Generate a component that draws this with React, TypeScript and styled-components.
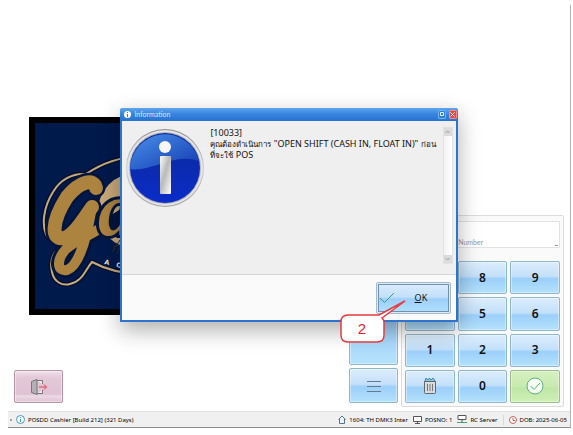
import React from "react";
import styled, { createGlobalStyle, css } from "styled-components";

const GlobalStyle = createGlobalStyle`
  * { box-sizing: border-box; }
  html, body, #root { height: 100%; }
  body {
    margin: 0;
    background: #fff;
    font-family: "Noto Sans", "Open Sans", sans-serif;
    color: #222;
  }
  button, input, textarea { font: inherit; color: inherit; }
`;

const Page = styled.div`
  height: 100%;
  min-height: 320px;
  padding: 5px 2px 7px 8px;
`;

const AppWindow = styled.div`
  position: relative;
  height: 100%;
  display: flex;
  flex-direction: column;
  border-right: 1px solid #b4b4b8;
  border-bottom: 1px solid #8c8c8c;
`;

const Workspace = styled.main`
  flex: 1;
  min-height: 0;
  display: flex;
  justify-content: space-between;
  align-items: flex-end;
  padding: 0 6px 4px;
`;

const LeftColumn = styled.div`
  display: flex;
  flex-direction: column;
  align-items: flex-start;
  gap: 55px;
  padding-bottom: 4px;
`;

const LogoFrame = styled.div`
  margin-left: 15px;
  width: 198px;
  height: 198px;
  border: 6px solid #000;
  background: #001a4c;
  svg { display: block; width: 100%; height: 100%; }
`;

type Tone = "blue" | "green" | "pink";

const tones = {
  blue: css`
    border-color: #8fb6cf;
    background: linear-gradient(#dcedfc 0%, #c3e0fa 46%, #9ccffa 54%, #b4e2fc 100%);
  `,
  green: css`
    border-color: #9dbb8d;
    background: linear-gradient(#d5f0bf 0%, #c8eab0 50%, #bfe6a6 54%, #cdf0b4 100%);
  `,
  pink: css`
    border-color: #b795a9;
    background: linear-gradient(#f2e2ec 0%, #e4c9d9 20%, #dfc2d3 75%, #ecdae5 80%, #dfc2d3 100%);
  `,
};

const Key = styled.button<{ $tone?: Tone }>`
  display: flex;
  align-items: center;
  justify-content: center;
  min-width: 0;
  padding: 0;
  border: 1px solid;
  border-radius: 2px;
  box-shadow: inset 0 0 0 1px rgba(255, 255, 255, 0.4);
  font-size: 12px;
  line-height: 16px;
  font-weight: 600;
  color: #111;
  ${({ $tone = "blue" }) => tones[$tone]}
`;

const ExitKey = styled(Key)`
  width: 49px;
  height: 33px;
`;

const RightColumn = styled.div`
  display: flex;
  align-items: flex-end;
  gap: 3px;
`;

const SideKeys = styled.div`
  display: grid;
  width: 49px;
  height: 142px;
  margin-bottom: 4px;
  grid-template-rows: 3fr 1fr;
  row-gap: 3px;
`;

const Panel = styled.section`
  width: 163px;
  padding: 5px 3px 3px;
  border: 1px solid #dcdcdc;
  border-radius: 2px;
  background: #fafafa;
`;

const NumberField = styled.textarea`
  display: block;
  width: 100%;
  height: 27px;
  margin-bottom: 13px;
  padding: 15px 2px 0 34px;
  border: 1px solid #e2e2e2;
  background:
    linear-gradient(#999, #999) right 1px bottom 1px / 3px 1px no-repeat,
    #fff;
  font-family: Lato, "Noto Sans", sans-serif;
  font-size: 7px;
  line-height: 10px;
  overflow: hidden;
  white-space: nowrap;
  resize: none;
  &::placeholder { color: #999; opacity: 1; }
`;

const Keypad = styled.div`
  display: grid;
  height: 142px;
  grid-template-columns: repeat(3, 1fr);
  grid-auto-rows: 1fr;
  gap: 3px;
`;

const StatusBar = styled.footer`
  display: flex;
  align-items: center;
  height: 16px;
  padding: 0 3px 0 2px;
  border-top: 1px solid #e2e2e2;
  background: #f0f0f0;
  font-size: 6px;
  line-height: 10px;
  color: #000;
  white-space: nowrap;
`;

const Grip = styled.span`
  width: 2px;
  height: 2px;
  margin-right: 4px;
  background: #b79aa0;
`;

const StatusItem = styled.span<{ $divided?: boolean }>`
  display: flex;
  align-items: center;
  gap: 3px;
  svg { flex: none; }
  ${({ $divided }) =>
    $divided &&
    css`
      padding-left: 5px;
      border-left: 1px solid #d8d8d8;
    `}
`;

const StatusGroup = styled.div`
  display: flex;
  gap: 5px;
  margin-left: auto;
`;

const Overlay = styled.div`
  position: absolute;
  inset: 0 0 3px;
  display: flex;
  align-items: center;
  justify-content: center;
`;

const Dialog = styled.section`
  position: relative;
  display: flex;
  flex-direction: column;
  width: 60%;
  min-width: 337px;
  height: 214px;
  border: 2px solid #2c74ce;
  border-top: 0;
  border-radius: 3px 3px 1px 1px;
  background: #fafafa;
  box-shadow: 0 8px 22px rgba(0, 0, 0, 0.32);
`;

const TitleBar = styled.header`
  display: flex;
  align-items: center;
  gap: 3px;
  height: 13px;
  margin: 0 -2px;
  padding: 0 1px 0 4px;
  border-radius: 3px 3px 0 0;
  background: linear-gradient(#5ea5ee, #3583de 50%, #2672d2);
  color: #d5e9fc;
  svg { flex: none; }
`;

const Title = styled.h1`
  flex: 1;
  margin: 0;
  font-family: Lato, "Noto Sans", sans-serif;
  font-size: 7px;
  line-height: 12px;
  font-weight: 400;
`;

const TitleButton = styled.button<{ $close?: boolean }>`
  display: flex;
  align-items: center;
  justify-content: center;
  width: 8px;
  height: 9px;
  padding: 0;
  border: 1px solid ${({ $close }) => ($close ? "#f08c88" : "#6fb2ee")};
  border-radius: 1px;
  background: ${({ $close }) => ($close ? "#df4b48" : "#2e80d4")};
`;

const DialogBody = styled.div`
  flex: 1;
  display: flex;
  gap: 6px;
  padding: 6px 3px 10px 2px;
  border-bottom: 1px solid #d6d6d6;
  background: #efefef;
`;

const InfoPicture = styled.svg`
  flex: none;
  width: 80px;
  height: 80px;
`;

const Message = styled.p`
  flex: 1;
  min-width: 0;
  margin: 0;
  font-size: 9px;
  line-height: 11px;
  color: #111;
`;

const MessageLine = styled.span`
  display: block;
  white-space: nowrap;
`;

const Thai = styled.span`
  font-size: 8px;
`;

const ScrollTrack = styled.div`
  display: flex;
  flex-direction: column;
  justify-content: space-between;
  width: 10px;
  border: 1px solid #e2e2e2;
  background: linear-gradient(90deg, #f3f3f3, #fff);
`;

const ScrollButton = styled.button`
  display: flex;
  align-items: center;
  justify-content: center;
  height: 8px;
  padding: 0;
  border: 0;
  background: #dcdcdc;
`;

const DialogFooter = styled.div`
  display: flex;
  justify-content: flex-end;
  padding: 7px 5px 6px;
`;

const OkButton = styled(Key)`
  width: 75px;
  height: 32px;
  border: 1px solid #a9bac6;
  outline: 1px solid #6f93af;
  outline-offset: -3px;
  box-shadow: inset 0 0 0 2px #d9ebf7;
  justify-content: flex-start;
  gap: 20px;
  padding-left: 2px;
  font-size: 9px;
  font-weight: 400;
`;

const Callout = styled.div`
  position: absolute;
  right: 50px;
  bottom: -24px;
  width: 66px;
  height: 44px;
  svg { display: block; overflow: visible; }
`;

function BrandLogo() {
  return (
    <LogoFrame>
      <svg viewBox="35 123 186 186" role="img" aria-label="Logo">
        <path
          d="M150 158Q118 153 86 174C72 173 60 180 53 192C43 208 42 225 46 234C49 241 55 242 60 247C51 254 50 263 52 272C54 282 62 286 70 284C83 281 85 270 92 262Q122 278 160 272"
          fill="none" stroke="#05102d" strokeWidth="5"
        />
        <path
          d="M150 158Q118 153 86 174C72 173 60 180 53 192C43 208 42 225 46 234C49 241 55 242 60 247C51 254 50 263 52 272C54 282 62 286 70 284C83 281 85 270 92 262Q122 278 160 272"
          fill="none" stroke="#c6aa80" strokeWidth="2"
        />
        <circle cx="136" cy="211" r="38" fill="#c9a878" />
        <g fill="none" strokeLinecap="round" strokeLinejoin="round">
          <path d="M96 188C94 178 80 181 67 197C51 222 51 241 64 238C75 235 84 218 92 207" stroke="#04153c" strokeWidth="19" />
          <path d="M91 215C87 236 79 266 67 270C57 272 56 260 66 249C81 236 103 231 126 215" stroke="#04153c" strokeWidth="16" />
          <path d="M96 188C94 178 80 181 67 197C51 222 51 241 64 238C75 235 84 218 92 207" stroke="#ac8440" strokeWidth="14" />
          <path d="M91 212C87 236 79 266 67 270C57 272 56 260 66 249C81 236 94 235 104 225" stroke="#ac8440" strokeWidth="10" />
        </g>
        <text
          x="98" y="235" fontFamily="Liberation Serif, serif" fontSize="76" fontWeight="700" fontStyle="italic"
          fill="#ac8440" stroke="#04153c" strokeWidth="6" paintOrder="stroke"
        >a</text>
        <g fill="none" stroke="#382a17">
          <path d="M112 252L120 240M117 254L124 238M113 247L124 244" strokeWidth="1" />
        </g>
        <text x="104" y="264" transform="rotate(12 104 264)" fontFamily="Liberation Sans, sans-serif" fontSize="7" fontWeight="700" fill="#fff">A</text>
        <text x="116" y="267" transform="rotate(10 116 267)" fontFamily="Liberation Sans, sans-serif" fontSize="7" fontWeight="700" fill="#fff">C</text>
      </svg>
    </LogoFrame>
  );
}

const ExitIcon = () => (
  <svg width="18" height="18" viewBox="0 0 18 18" fill="none">
    <path d="M7 2.500H12.500V6M12.500 12V15.500H7" stroke="#777" fill="#f4e9f0" />
    <path d="M7 1.500V16.500L1.500 14.500V3.500Z" fill="#b4b0b4" stroke="#777" />
    <path d="M9 9H16.500M14 6.500L16.500 9L14 11.500" stroke="#e0405a" />
  </svg>
);

const MenuIcon = () => (
  <svg width="14" height="12" viewBox="0 0 14 12" stroke="#66798a">
    <path d="M0 1.500H14M0 6.500H14M0 11.500H14" />
  </svg>
);

const TrashIcon = () => (
  <svg width="14" height="18" viewBox="0 0 14 18" fill="none">
    <path d="M2 4L3 1L5 3L6.500 1L8 3L10 1L12 4" stroke="#3c88b8" fill="#8ec4e4" />
    <rect x="1.500" y="4.500" width="11" height="12" rx="1" fill="#d8dce0" stroke="#666" />
    <path d="M1 4.500H13" stroke="#666" />
    <path d="M4.500 7V14M7 7V14M9.500 7V14" stroke="#777" />
  </svg>
);

const ConfirmIcon = () => (
  <svg width="18" height="18" viewBox="0 0 18 18" fill="none" stroke="#5cb083">
    <circle cx="9" cy="9" r="8" fill="#f5fff2" />
    <path d="M4.500 9L8 12.500L14 6" />
  </svg>
);

const InfoSmall = () => (
  <svg width="9" height="9" viewBox="0 0 9 9" fill="none" stroke="#3d9bd0">
    <circle cx="4.500" cy="4.500" r="4" fill="#fff" />
    <path d="M4.500 2V3M4.500 4V7" />
  </svg>
);

const HomeIcon = () => (
  <svg width="8" height="9" viewBox="0 0 8 9" fill="#eef5fa" stroke="#56748c">
    <path d="M1.500 4V8.500H6.500V4M.5 4.500L4 1L7.500 4.500" />
  </svg>
);

const MonitorIcon = () => (
  <svg width="9" height="9" viewBox="0 0 9 9" fill="#fff" stroke="#555">
    <path d="M.5 1.500H8.500V6.500H.5ZM2 8.500H7M4.500 6.500V8.500" />
  </svg>
);

const ServerIcon = () => (
  <svg width="10" height="9" viewBox="0 0 10 9" fill="#fff" stroke="#555">
    <path d="M1 .5H9V4.500H1ZM5 4.500V7" />
    <path d="M0 7.500H10" stroke="#45a86f" />
  </svg>
);

const ClockIcon = () => (
  <svg width="8" height="8" viewBox="0 0 8 8" fill="#fff" stroke="#c4605c">
    <circle cx="4" cy="4" r="3.500" />
    <path d="M4 2V4.500H6" />
  </svg>
);

function InfoEmblem() {
  return (
    <InfoPicture viewBox="0 0 80 80" role="img" aria-label="Information">
      <defs>
        <linearGradient id="rim" x2="0" y2="1">
          <stop offset="0" stopColor="#8d8d8d" />
          <stop offset="0.5" stopColor="#d0d0d0" />
          <stop offset="1" stopColor="#a2a2a2" />
        </linearGradient>
        <linearGradient id="disc" x2="0" y2="1">
          <stop offset="0" stopColor="#0a2a98" />
          <stop offset="1" stopColor="#0b2cc8" />
        </linearGradient>
        <linearGradient id="gloss" x2="1" y2="1">
          <stop offset="0" stopColor="#4a90ea" />
          <stop offset="1" stopColor="#123ab0" />
        </linearGradient>
        <linearGradient id="stem" x2="1" y2="1">
          <stop offset="0" stopColor="#fff" />
          <stop offset="0.45" stopColor="#b9b9b9" />
          <stop offset="1" stopColor="#fff" />
        </linearGradient>
      </defs>
      <circle cx="41" cy="41" r="39" fill="url(#rim)" />
      <circle cx="41" cy="41" r="38" fill="#e4e4e4" />
      <circle cx="41" cy="41" r="36" fill="#b4b4bc" />
      <circle cx="41" cy="41" r="35" fill="url(#disc)" />
      <path d="M6 42A35 35 0 0 1 75 34C49 25 27 46 6 42Z" fill="url(#gloss)" />
      <circle cx="41" cy="20" r="6" fill="#f6f6f6" />
      <rect x="36" y="29" width="11" height="38" rx="1" fill="url(#stem)" />
    </InfoPicture>
  );
}

const digits = ["7", "8", "9", "4", "5", "6", "1", "2", "3"];

export default function App() {
  return (
    <>
      <GlobalStyle />
      <Page>
        <AppWindow>
          <Workspace>
            <LeftColumn>
              <BrandLogo />
              <ExitKey $tone="pink" aria-label="Exit"><ExitIcon /></ExitKey>
            </LeftColumn>
            <RightColumn>
              <SideKeys>
                <Key aria-label="Function" />
                <Key aria-label="Menu"><MenuIcon /></Key>
              </SideKeys>
              <Panel>
                <NumberField aria-label="Number" placeholder="Enter Number" />
                <Keypad>
                  {digits.map((d) => <Key key={d}>{d}</Key>)}
                  <Key aria-label="Clear"><TrashIcon /></Key>
                  <Key>0</Key>
                  <Key $tone="green" aria-label="Confirm"><ConfirmIcon /></Key>
                </Keypad>
              </Panel>
            </RightColumn>
          </Workspace>

          <StatusBar>
            <Grip />
            <StatusItem><InfoSmall />POSDD Cashier [Build 212] (321 Days)</StatusItem>
            <StatusGroup>
              <StatusItem><HomeIcon />1604: TH DMK3 Inter</StatusItem>
              <StatusItem><MonitorIcon />POSNO: 1</StatusItem>
              <StatusItem><ServerIcon />RC Server</StatusItem>
              <StatusItem $divided><ClockIcon />DOB: 2025-06-05</StatusItem>
            </StatusGroup>
          </StatusBar>

          <Overlay>
            <Dialog role="dialog" aria-labelledby="dialog-title">
              <TitleBar>
                <svg width="7" height="7" viewBox="0 0 7 7">
                  <circle cx="3.500" cy="3.500" r="3.500" fill="#fff" />
                  <path d="M3.500 1V2M3.500 3V6" stroke="#2f7fd8" />
                </svg>
                <Title id="dialog-title">Information</Title>
                <TitleButton aria-label="Maximize">
                  <svg width="4" height="4" viewBox="0 0 4 4"><path d="M.5 .5H3.500V3.500H.5Z" fill="none" stroke="#e4f2ff" /></svg>
                </TitleButton>
                <TitleButton $close aria-label="Close">
                  <svg width="5" height="5" viewBox="0 0 5 5"><path d="M.5 .5L4.500 4.500M4.500 .5L.5 4.500" stroke="#fff" /></svg>
                </TitleButton>
              </TitleBar>
              <DialogBody>
                <InfoEmblem />
                <Message>
                  <MessageLine>[10033]</MessageLine>
                  <MessageLine>
                    <Thai>คุณต้องดำเนินการ</Thai> "OPEN SHIFT (CASH IN, FLOAT IN)" <Thai>ก่อน</Thai>
                  </MessageLine>
                  <MessageLine><Thai>ที่จะใช้</Thai> POS</MessageLine>
                </Message>
                <ScrollTrack>
                  <ScrollButton aria-label="Scroll up">
                    <svg width="5" height="4" viewBox="0 0 5 4"><path d="M.5 3L2.500 1L4.500 3" fill="none" stroke="#999" /></svg>
                  </ScrollButton>
                  <ScrollButton aria-label="Scroll down">
                    <svg width="5" height="4" viewBox="0 0 5 4"><path d="M.5 1L2.500 3L4.500 1" fill="none" stroke="#999" /></svg>
                  </ScrollButton>
                </ScrollTrack>
              </DialogBody>
              <DialogFooter>
                <OkButton>
                  <svg width="16" height="12" viewBox="0 0 16 12"><path d="M1 6L5.500 10.500L15 1" fill="none" stroke="#35a079" /></svg>
                  <span><u>O</u>K</span>
                </OkButton>
              </DialogFooter>
              <Callout>
                <svg width="66" height="44" viewBox="0 0 66 44">
                  <path
                    d="M7 15H37C38 15 38 15 39 15L65 1L42 18C44 20 44 21 44 22V35Q44 42 37 42H8Q1 42 1 35V22Q1 15 8 15Z"
                    fill="#fff" stroke="#e83a3e" strokeWidth="1.500"
                  />
                  <text x="22" y="34" textAnchor="middle" fontFamily="Liberation Sans, sans-serif" fontSize="15" fill="#e0272b">2</text>
                </svg>
              </Callout>
            </Dialog>
          </Overlay>
        </AppWindow>
      </Page>
    </>
  );
}
